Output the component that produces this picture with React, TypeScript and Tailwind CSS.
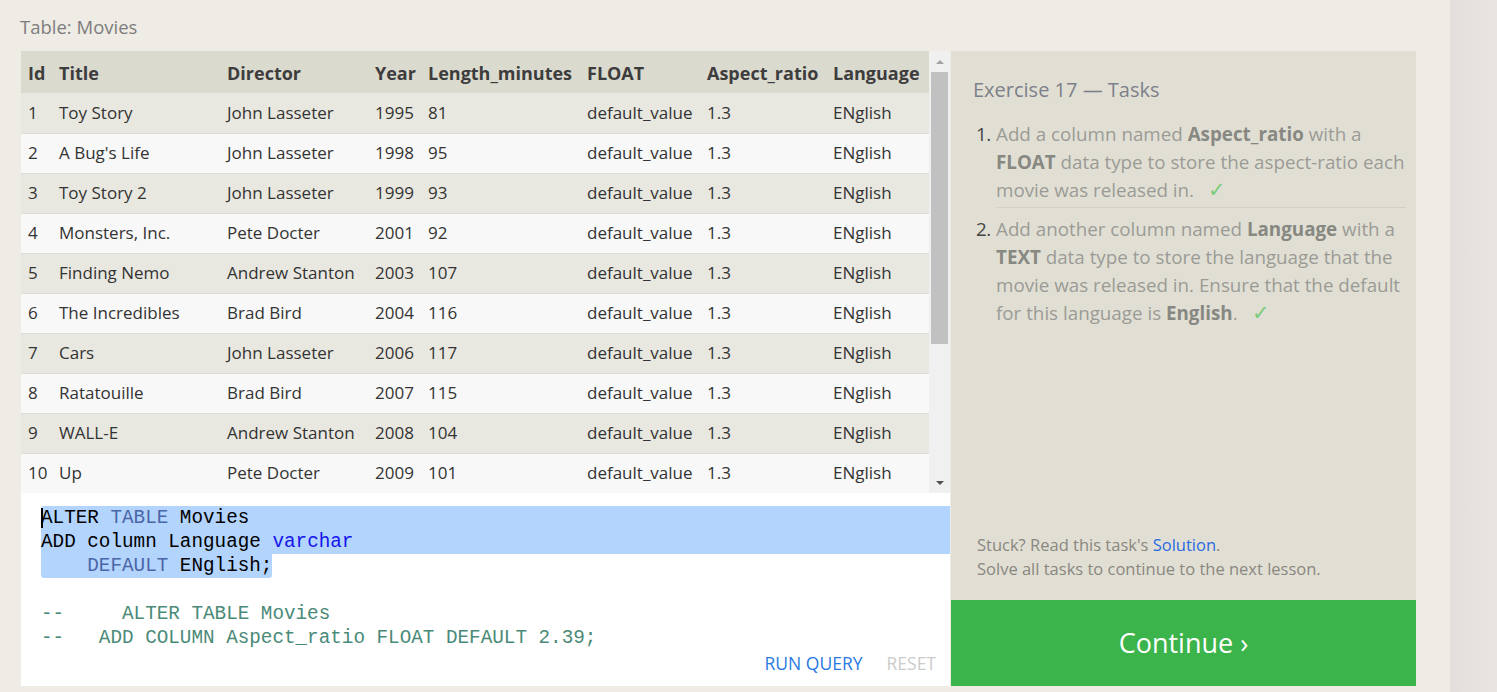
import React from 'react';

const movies = [
  { id: 1, title: 'Toy Story', director: 'John Lasseter', year: 1995, length: 81 },
  { id: 2, title: "A Bug's Life", director: 'John Lasseter', year: 1998, length: 95 },
  { id: 3, title: 'Toy Story 2', director: 'John Lasseter', year: 1999, length: 93 },
  { id: 4, title: 'Monsters, Inc.', director: 'Pete Docter', year: 2001, length: 92 },
  { id: 5, title: 'Finding Nemo', director: 'Andrew Stanton', year: 2003, length: 107 },
  { id: 6, title: 'The Incredibles', director: 'Brad Bird', year: 2004, length: 116 },
  { id: 7, title: 'Cars', director: 'John Lasseter', year: 2006, length: 117 },
  { id: 8, title: 'Ratatouille', director: 'Brad Bird', year: 2007, length: 115 },
  { id: 9, title: 'WALL-E', director: 'Andrew Stanton', year: 2008, length: 104 },
  { id: 10, title: 'Up', director: 'Pete Docter', year: 2009, length: 101 },
];

function Scrollbar() {
  return (
    <div className="w-[21px] h-full bg-[#f0f0f0] flex flex-col items-center">
      <div className="h-[21px] w-full flex items-center justify-center">
        <div className="w-0 h-0 border-l-[4px] border-r-[4px] border-b-[4px] border-l-transparent border-r-transparent border-b-[#a3a3a3]" />
      </div>
      <div className="w-[17px] h-[272px] bg-[#c1c1c1]" />
      <div className="flex-1" />
      <div className="h-[21px] w-full flex items-center justify-center">
        <div className="w-0 h-0 border-l-[4px] border-r-[4px] border-t-[4px] border-l-transparent border-r-transparent border-t-[#505050]" />
      </div>
    </div>
  );
}

function MoviesTable() {
  const cell = 'pl-[7px] whitespace-nowrap';
  return (
    <div className="flex h-[442px] bg-[#e9e8e0]">
      <div className="w-[908px] overflow-hidden">
        <table className="w-full border-collapse text-[17px] text-[#333]">
          <thead>
            <tr className="h-[42px] bg-[#dbdacf] text-[#3d3d3d] font-bold text-[18px]">
              <th className={`${cell} pt-[2px] w-[31px] text-left`}>Id</th>
              <th className={`${cell} pt-[2px] w-[168px] text-left`}>Title</th>
              <th className={`${cell} pt-[2px] w-[148px] text-left`}>Director</th>
              <th className={`${cell} pt-[2px] w-[53px] text-left`}>Year</th>
              <th className={`${cell} pt-[2px] w-[159px] text-left`}>Length_minutes</th>
              <th className={`${cell} pt-[2px] w-[120px] text-left`}>FLOAT</th>
              <th className={`${cell} pt-[2px] w-[126px] text-left`}>Aspect_ratio</th>
              <th className={`${cell} pt-[2px] text-left`}>Language</th>
            </tr>
          </thead>
          <tbody>
            {movies.map((m, i) => (
              <tr
                key={m.id}
                className={`h-[40px] border-b border-[#dddcd6] ${i % 2 === 0 ? 'bg-[#e9e8e0]' : 'bg-[#f8f8f8]'}`}
              >
                <td className={cell}>{m.id}</td>
                <td className={cell}>{m.title}</td>
                <td className={cell}>{m.director}</td>
                <td className={cell}>{m.year}</td>
                <td className={cell}>{m.length}</td>
                <td className={cell}>default_value</td>
                <td className={cell}>1.3</td>
                <td className={cell}>ENglish</td>
              </tr>
            ))}
          </tbody>
        </table>
      </div>
      <Scrollbar />
    </div>
  );
}

function Editor() {
  return (
    <div className="flex-1 bg-white flex flex-col pt-[13px] pl-[20px] font-['Liberation_Mono',monospace] text-[19.3px] leading-[24px] text-black">
      <div className="relative">
        <div className="bg-[#b3d4fc] rounded-tl-[3px]">
          <div className="relative">
            <span className="absolute left-0 top-[2px] w-[2px] h-[20px] bg-black" />
            ALTER <span className="text-[#4a66a8]">TABLE</span> Movies
          </div>
          <div>
            ADD column Language <span className="text-[#1515ee]">varchar</span>
          </div>
        </div>
        <div className="inline-block bg-[#b3d4fc] rounded-b-[3px] whitespace-pre">
          {'    '}<span className="text-[#4a66a8]">DEFAULT</span> ENglish;
        </div>
        <div className="h-[24px]" />
        <div className="text-[#4a8a78] whitespace-pre">{'--     ALTER TABLE Movies'}</div>
        <div className="text-[#4a8a78] whitespace-pre">{'--   ADD COLUMN Aspect_ratio FLOAT DEFAULT 2.39;'}</div>
      </div>
      <div className="flex justify-end gap-[24px] pr-[14px] mt-[1px] font-['Open_Sans',sans-serif] text-[17.5px] leading-[24px]">
        <span className="text-[#2a7ae2]">RUN QUERY</span>
        <span className="text-[#cccccc]">RESET</span>
      </div>
    </div>
  );
}

function Check() {
  return <span className="text-[#7acb7a] ml-[14px] text-[21px] font-light leading-[20px]">✓</span>;
}

function TaskPanel() {
  const strong = 'font-bold text-[#888882]';
  return (
    <div className="w-[465px] flex flex-col">
      <div className="flex-1 bg-[#e1dfd4] pl-[22px] pr-[10px] pt-[25px] flex flex-col">
        <h2 className="text-[20px] leading-[28px] text-[#7c7f8a]">Exercise 17 — Tasks</h2>
        <div className="mt-[16px] text-[18.8px] leading-[28px] text-[#9b9b96] whitespace-nowrap">
          <div className="flex">
            <span className="w-[23px] text-[#444] pl-[3px] tracking-[-0.5px]">1.</span>
            <div className="flex-1 border-b border-[#d3d1c6] pb-[3px]">
              Add a column named <span className={strong}>Aspect_ratio</span> with a
              <br />
              <span className={strong}>FLOAT</span> data type to store the aspect-ratio each
              <br />
              movie was released in.
              <Check />
            </div>
          </div>
          <div className="flex mt-[7px]">
            <span className="w-[23px] text-[#444] pl-[3px] tracking-[-0.5px]">2.</span>
            <div className="flex-1">
              Add another column named <span className={strong}>Language</span> with a
              <br />
              <span className={strong}>TEXT</span> data type to store the language that the
              <br />
              movie was released in. Ensure that the default
              <br />
              for this language is <span className={strong}>English</span>.
              <Check />
            </div>
          </div>
        </div>
        <div className="flex-1" />
        <div className="pl-[4px] pb-[19px] text-[16.5px] leading-[24px] text-[#8a8780]">
          <p>
            Stuck? Read this task's <span className="text-[#2a6ae0]">Solution</span>.
          </p>
          <p>Solve all tasks to continue to the next lesson.</p>
        </div>
      </div>
      <button className="h-[86px] bg-[#3bb44b] text-white text-[27px] flex items-center justify-center">
        Continue ›
      </button>
    </div>
  );
}

export default function App() {
  return (
    <div className="flex h-[692px] w-full bg-[#efece5] font-['Open_Sans',sans-serif] overflow-hidden">
      <div className="w-[1450px] pl-[21px] flex flex-col">
        <div className="h-[51px] pt-[14px] -ml-[1px] text-[18.5px] leading-[26px] text-[#7d7d7d]">Table: Movies</div>
        <div className="flex h-[635px] gap-[1px]">
          <div className="w-[929px] flex flex-col">
            <MoviesTable />
            <Editor />
          </div>
          <TaskPanel />
        </div>
      </div>
      <div className="flex-1 bg-gradient-to-r from-[#e2dedc] to-[#e9e5e2]" />
    </div>
  );
}
